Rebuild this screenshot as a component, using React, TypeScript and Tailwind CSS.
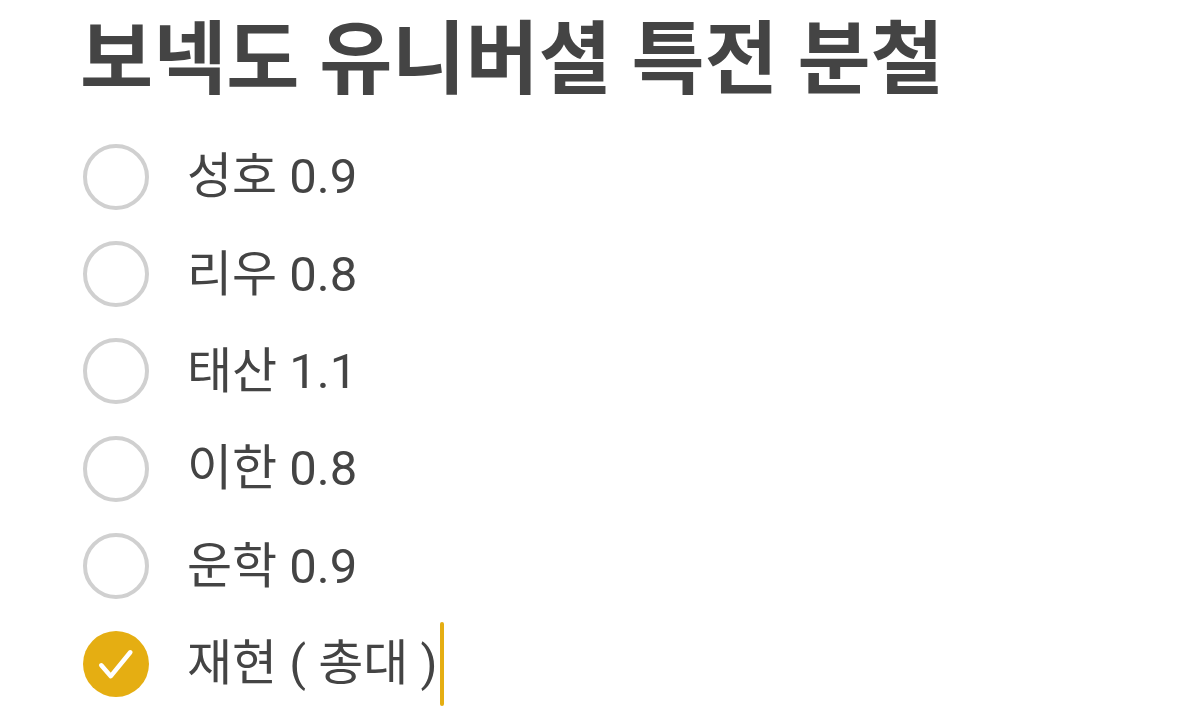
import React from 'react';

const items = [
  { label: '성호 0.9', checked: false },
  { label: '리우 0.8', checked: false },
  { label: '태산 1.1', checked: false },
  { label: '이한 0.8', checked: false },
  { label: '운학 0.9', checked: false },
  { label: '재현 ( 총대 )', checked: true },
];

function Check({ checked }: { checked: boolean }) {
  if (checked) {
    return (
      <div className="w-[66px] h-[66px] rounded-full bg-[#e5ae12] flex items-center justify-center shrink-0">
        <svg width="52" height="52" viewBox="0 0 24 24" fill="none" className="shrink-0">
          <path d="M5.2 12.6l4.4 5L18.6 6.6" stroke="white" strokeWidth="2.1" strokeLinecap="round" strokeLinejoin="round" />
        </svg>
      </div>
    );
  }
  return <div className="w-[66px] h-[66px] rounded-full border-[4px] border-[#d0d0d0] shrink-0" />;
}

export default function App() {
  return (
    <div
      className="w-[1200px] h-[723px] bg-white overflow-hidden pl-[80px] pt-[4px] text-[#444444]"
      style={{ fontFamily: 'Roboto, "Noto Sans CJK KR", "Noto Sans", sans-serif' }}
    >
      <h1 className="text-[79.5px] font-bold leading-[111px] mb-[13px]">보넥도 유니버셜 특전 분철</h1>
      <ul className="flex flex-col">
        {items.map((it) => (
          <li key={it.label} className="flex items-center h-[97.4px] pl-[3px]">
            <Check checked={it.checked} />
            <span className="ml-[38px] text-[49px] leading-none flex items-center">
              {it.label}
              {it.checked && <span className="inline-block w-[4px] h-[84px] bg-[#e5ae12] rounded-full ml-[2px]" />}
            </span>
          </li>
        ))}
      </ul>
    </div>
  );
}
